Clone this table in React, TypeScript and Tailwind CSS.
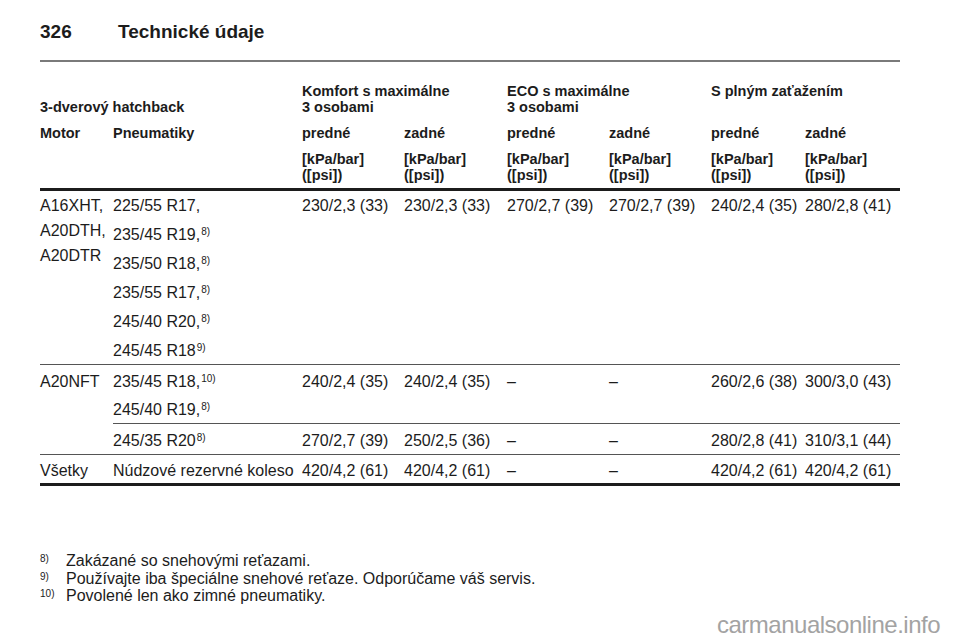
import React from "react";

const cols = "grid grid-cols-[73px_189px_102px_103px_102px_102px_94px_95px]";
const sub = "grid grid-cols-[189px_102px_103px_102px_102px_94px_95px]";

const Sup = ({ n }: { n: string }) => <sup className="text-[10px] ml-[1px]">{n})</sup>;

const groups = [
	{ title: ["Komfort s maximálne", "3 osobami"], span: "col-span-2" },
	{ title: ["ECO s maximálne", "3 osobami"], span: "col-span-2" },
	{ title: ["S plným zaťažením"], span: "col-span-2" },
];

const row1Tires: [string, string | null][] = [
	["225/55 R17,", null],
	["235/45 R19,", "8"],
	["235/50 R18,", "8"],
	["235/55 R17,", "8"],
	["245/40 R20,", "8"],
	["245/45 R18", "9"],
];

const Values = ({ vals }: { vals: string[] }) => (
	<>
		{vals.map((v, i) => (
			<div key={i}>{v}</div>
		))}
	</>
);

export default function App() {
	return (
		<div className="w-[960px] h-[642px] bg-white text-[#1c1c1c] font-['Liberation_Sans',Arial,sans-serif] pt-[20px] px-[40px] overflow-hidden">
			{/* page header */}
			<div className="flex text-[19px] font-bold leading-[24px] w-[860px]">
				<span className="w-[78px]">326</span>
				<span>Technické údaje</span>
			</div>
			<div className="mt-[16px] h-[2px] bg-[#7a7a7a] w-[860px]" />

			{/* table */}
			<div className="w-[860px] text-[16px]">
				<div className="text-[14.5px] font-bold leading-[16px] pt-[21px]">
					<div className={cols}>
						<div className="col-span-2 self-end">3-dverový hatchback</div>
						{groups.map((g, i) => (
							<div key={i} className={g.span}>
								{g.title.map((t) => (
									<div key={t}>{t}</div>
								))}
							</div>
						))}
					</div>
					<div className={`${cols} mt-[10px]`}>
						<div>Motor</div>
						<div>Pneumatiky</div>
						{["predné", "zadné", "predné", "zadné", "predné", "zadné"].map((t, i) => (
							<div key={i}>{t}</div>
						))}
					</div>
					<div className={`${cols} mt-[10px] pb-[5px]`}>
						<div />
						<div />
						{[0, 1, 2, 3, 4, 5].map((i) => (
							<div key={i}>
								<div>[kPa/bar]</div>
								<div>([psi])</div>
							</div>
						))}
					</div>
				</div>
				<div className="h-[3px] bg-[#1c1c1c]" />

				{/* row 1 */}
				<div className={`${cols} leading-[20px] pt-[5px] pb-[3px]`}>
					<div className="flex flex-col gap-[5px]">
						<div>A16XHT,</div>
						<div>A20DTH,</div>
						<div>A20DTR</div>
					</div>
					<div className="flex flex-col gap-[9px]">
						{row1Tires.map(([t, n]) => (
							<div key={t}>
								{t}
								{n && <Sup n={n} />}
							</div>
						))}
					</div>
					<Values vals={["230/2,3 (33)", "230/2,3 (33)", "270/2,7 (39)", "270/2,7 (39)", "240/2,4 (35)", "280/2,8 (41)"]} />
				</div>
				<div className="h-px bg-[#555]" />

				{/* rows 2 + 3 */}
				<div className="flex leading-[20px]">
					<div className="w-[73px] pt-[7px]">A20NFT</div>
					<div className="flex-1 flex flex-col">
						<div className={`${sub} pt-[7px] pb-[3px]`}>
							<div className="flex flex-col gap-[8px]">
								<div>
									235/45 R18,
									<Sup n="10" />
								</div>
								<div>
									245/40 R19,
									<Sup n="8" />
								</div>
							</div>
							<Values vals={["240/2,4 (35)", "240/2,4 (35)", "–", "–", "260/2,6 (38)", "300/3,0 (43)"]} />
						</div>
						<div className="h-px bg-[#555]" />
						<div className={`${sub} pt-[7px] pb-[3px]`}>
							<div>
								245/35 R20
								<Sup n="8" />
							</div>
							<Values vals={["270/2,7 (39)", "250/2,5 (36)", "–", "–", "280/2,8 (41)", "310/3,1 (44)"]} />
						</div>
					</div>
				</div>
				<div className="h-px bg-[#555]" />

				{/* row 4 */}
				<div className={`${cols} leading-[20px] pt-[6px] pb-[2px]`}>
					<div>Všetky</div>
					<div>Núdzové rezervné koleso</div>
					<Values vals={["420/4,2 (61)", "420/4,2 (61)", "–", "–", "420/4,2 (61)", "420/4,2 (61)"]} />
				</div>
				<div className="h-[3px] bg-[#1c1c1c]" />
			</div>

			{/* footnotes */}
			<div className="mt-[66px] text-[16px] leading-[17.5px]">
				{[
					["8", "Zakázané so snehovými reťazami."],
					["9", "Používajte iba špeciálne snehové reťaze. Odporúčame váš servis."],
					["10", "Povolené len ako zimné pneumatiky."],
				].map(([n, t]) => (
					<div key={n} className="flex">
						<span className="w-[26px] text-[10px] leading-[10px] pt-[2px]">{n})</span>
						<span>{t}</span>
					</div>
				))}
			</div>

			<div className="flex justify-end -mr-[20px] mt-[6px]">
				<span className="text-[24px] leading-[28px] tracking-[-0.5px] text-[#a3a3a3]">carmanualsonline.info</span>
			</div>
		</div>
	);
}
